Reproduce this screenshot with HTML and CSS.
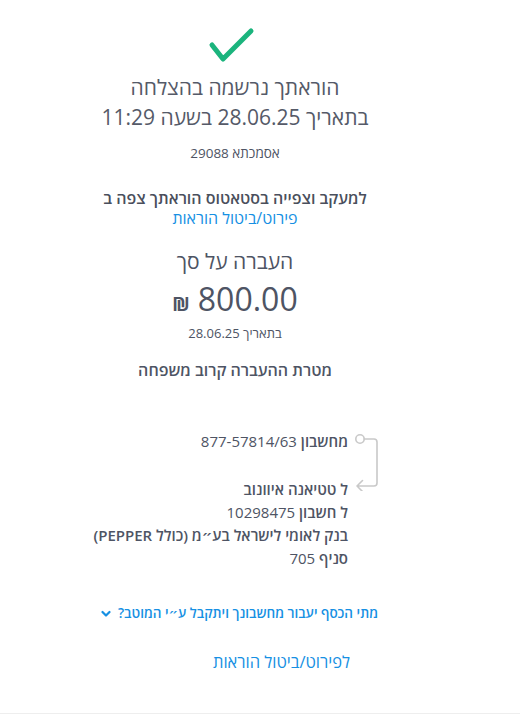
FILE: index.html
```html
<!DOCTYPE html>
<html lang="he" dir="rtl">
<head>
<meta charset="utf-8">
<link rel="stylesheet" href="styles.css">
</head>
<body>
<main class="page">
  <div class="check">
    <svg width="50" height="40" viewBox="0 0 50 40"><polyline points="5,18 16,32 44,4" fill="none" stroke="#1bb47d" stroke-width="5" stroke-linecap="round" stroke-linejoin="round"/></svg>
  </div>
  <h1 class="title">הוראתך נרשמה בהצלחה<br>בתאריך 28.06.25 בשעה 11:29</h1>
  <p class="ref">אסמכתא 29088</p>
  <p class="track">למעקב וצפייה בסטאטוס הוראתך צפה ב<br><a class="link" href="#">פירוט/ביטול הוראות</a></p>
  <p class="sum-label">העברה על סך</p>
  <p class="amount"><span class="num">800.00</span> <span class="cur">₪</span></p>
  <p class="date">בתאריך 28.06.25</p>
  <p class="purpose">מטרת ההעברה קרוב משפחה</p>

  <section class="accounts">
    <div class="icon">
      <svg width="30" height="60" viewBox="0 0 30 60"><circle cx="7" cy="8" r="4.2" fill="none" stroke="#c9c9c9" stroke-width="1.6"/><path d="M11.2 8 H21 Q24 8 24 11 V52 Q24 55 21 55 H4 M9.5 49.5 L4 55 L9.5 60.5" fill="none" stroke="#c9c9c9" stroke-width="1.6" stroke-linecap="round" stroke-linejoin="round"/></svg>
    </div>
    <div class="lines">
      <div class="from"><b>מחשבון</b> 877-57814/63</div>
      <div class="to">
        <div><b>ל טטיאנה איוונוב</b></div>
        <div><b>ל חשבון</b> 10298475</div>
        <div><b>בנק לאומי לישראל בע״מ (כולל PEPPER)</b></div>
        <div><b>סניף</b> 705</div>
      </div>
    </div>
  </section>

  <a class="when" href="#">מתי הכסף יעבור מחשבונך ויתקבל ע״י המוטב?
    <svg width="10" height="8" viewBox="0 0 10 8"><polyline points="1.5,2 5,5.5 8.5,2" fill="none" stroke="#1690e3" stroke-width="2.2" stroke-linecap="round" stroke-linejoin="round"/></svg>
  </a>
  <a class="bottom-link" href="#">לפירוט/ביטול הוראות</a>
</main>
</body>
</html>
```
FILE: styles.css
```css
html, body {
  margin: 0;
  padding: 0;
  background: #fff;
}
body {
  font-family: "Open Sans", "DejaVu Sans", sans-serif;
  color: #4e5464;
  height: 714px;
  box-sizing: border-box;
  border-bottom: 1px solid #eeeeee;
}
.page {
  width: 470px;
  margin-left: 0;
  margin-right: auto;
  display: flex;
  flex-direction: column;
  align-items: center;
  text-align: center;
}
p, h1 { margin: 0; }
a { text-decoration: none; }
.check {
  margin-top: 27px;
  height: 40px;
  display: flex;
  margin-right: 6px;
}
.title {
  font-weight: 400;
  font-size: 21px;
  line-height: 30px;
  margin-top: 5px;
  color: #555a68;
}
.ref {
  font-size: 13.5px;
  margin-top: 12px;
  line-height: 18px;
}
.track {
  margin-top: 26px;
  font-size: 16px;
  line-height: 20px;
  font-weight: 600;
  color: #4a4f5c;
}
.link {
  color: #1690e3;
  font-weight: 400;
  font-size: 16px;
}
.sum-label {
  margin-top: 18px;
  font-size: 21px;
  line-height: 30px;
}
.amount {
  margin-top: 3px;
  line-height: 40px;
  display: flex;
  align-items: baseline;
  gap: 8px;
}
.num { font-size: 32px; font-weight: 400; }
.cur { font-size: 19px; font-weight: 700; }
.date {
  margin-top: 0;
  font-size: 13px;
  line-height: 18px;
}
.purpose {
  margin-top: 18px;
  font-size: 16px;
  font-weight: 600;
  line-height: 20px;
}
.accounts {
  align-self: stretch;
  display: flex;
  gap: 5px;
  padding-right: 87px;
  margin-top: 50px;
  font-size: 15px;
  line-height: 23px;
  color: #4e5464;
}
.icon { padding-top: 1px; }
.lines { text-align: right; }
.lines b { font-weight: 600; }
.to { margin-top: 25px; }
.when {
  align-self: stretch;
  text-align: right;
  padding-right: 92px;
  margin-top: 33px;
  font-size: 13.5px;
  line-height: 20px;
  font-weight: 600;
  color: #1690e3;
}
.when svg { margin-right: 3px; }
.bottom-link {
  align-self: stretch;
  text-align: right;
  padding-right: 120px;
  margin-top: 29px;
  font-size: 16.5px;
  line-height: 20px;
  color: #1690e3;
}
```
